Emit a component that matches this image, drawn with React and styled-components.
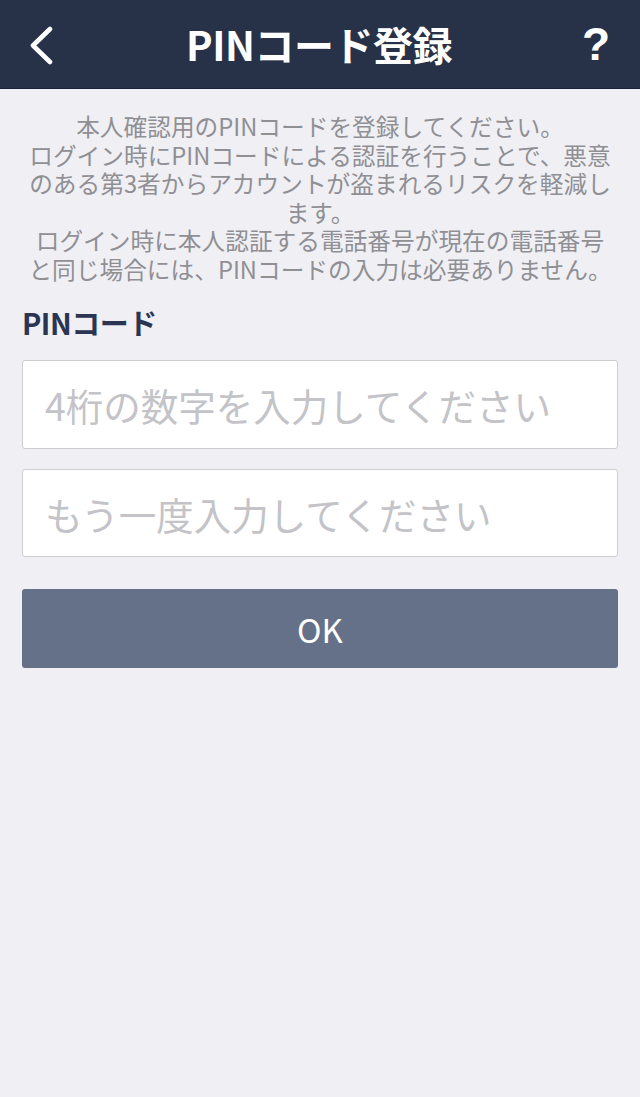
import React from "react";
import styled, { createGlobalStyle } from "styled-components";

const GlobalStyle = createGlobalStyle`
  html, body {
    margin: 0;
    padding: 0;
    background: #efeff4;
  }
  body {
    font-family: "Noto Sans CJK JP", "Noto Sans", sans-serif;
  }
  * { box-sizing: border-box; }
`;

const Page = styled.div`
  min-height: 1097px;
  background: #efeff4;
  display: flex;
  flex-direction: column;
`;

const Header = styled.header`
  height: 89px;
  background: #273148;
  border-bottom: 1px solid #1b2234;
  display: grid;
  grid-template-columns: 1fr auto 1fr;
  align-items: center;
  padding: 0 30px 0 28px;
`;

const BackButton = styled.button`
  justify-self: start;
  background: none;
  border: none;
  padding: 0;
  margin-top: 1px;
  width: 30px;
  height: 40px;
  display: flex;
  align-items: center;
  cursor: pointer;
`;

const Title = styled.h1`
  margin: 0;
  color: #ffffff;
  font-family: "Noto Sans CJK JP", sans-serif;
  font-weight: 700;
  font-size: 40px;
  line-height: 48px;
  letter-spacing: -0.5px;
`;

const HelpButton = styled.button`
  justify-self: end;
  background: none;
  border: none;
  padding: 0;
  color: #ffffff;
  font-family: "Liberation Sans", Arial, sans-serif;
  font-weight: 700;
  font-size: 46px;
  line-height: 48px;
  cursor: pointer;
`;

const Content = styled.main`
  display: flex;
  flex-direction: column;
  padding: 23px 22px 0;
`;

const Description = styled.p`
  margin: 0;
  color: #8f8f94;
  font-size: 23.7px;
  line-height: 28.5px;
  text-align: center;
`;

const Line = styled.span`
  display: block;
  white-space: nowrap;
`;

const Label = styled.h2`
  margin: 21px 0 20px;
  color: #2b3551;
  font-size: 29px;
  line-height: 36px;
  font-weight: 700;
  letter-spacing: -0.5px;
`;

const Field = styled.input`
  width: 100%;
  height: ${(p) => p.$h || 89}px;
  margin-bottom: ${(p) => p.$gap}px;
  border: 1px solid #cdcdd2;
  border-radius: 3px;
  background: #ffffff;
  padding: 0 22px;
  font-family: "Noto Sans CJK JP", sans-serif;
  font-size: 37.5px;
  color: #333;
  outline: none;
  &::placeholder {
    color: #c3c3c8;
  }
`;

const OkButton = styled.button`
  width: 100%;
  height: 79px;
  border: none;
  border-radius: 3px;
  background: #657089;
  color: #ffffff;
  font-family: "Noto Sans CJK JP", sans-serif;
  font-size: 33px;
  cursor: pointer;
`;

const Chevron = () => (
  <svg width="30" height="40" viewBox="0 0 30 40">
    <polyline
      points="22,4 5,20.5 22,37"
      fill="none"
      stroke="#ffffff"
      strokeWidth="4.6"
      strokeLinecap="round"
      strokeLinejoin="round"
    />
  </svg>
);

export default function App() {
  return (
    <>
      <GlobalStyle />
      <Page>
        <Header>
          <BackButton aria-label="戻る">
            <Chevron />
          </BackButton>
          <Title>PINコード登録</Title>
          <HelpButton aria-label="ヘルプ">?</HelpButton>
        </Header>
        <Content>
          <Description>
            <Line>本人確認用のPINコードを登録してください。</Line>
            <Line>ログイン時にPINコードによる認証を行うことで、悪意</Line>
            <Line>のある第3者からアカウントが盗まれるリスクを軽減し</Line>
            <Line>ます。</Line>
            <Line>ログイン時に本人認証する電話番号が現在の電話番号</Line>
            <Line>と同じ場合には、PINコードの入力は必要ありません。</Line>
          </Description>
          <Label>PINコード</Label>
          <Field type="tel" placeholder="4桁の数字を入力してください" $gap={20} />
          <Field type="tel" placeholder="もう一度入力してください" $gap={32} $h={88} />
          <OkButton>OK</OkButton>
        </Content>
      </Page>
    </>
  );
}
